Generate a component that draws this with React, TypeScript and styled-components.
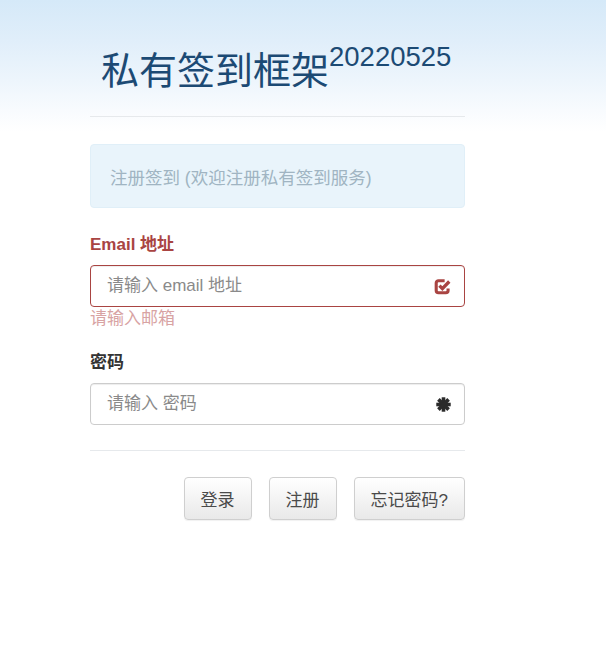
import styled, { createGlobalStyle } from 'styled-components';

const GlobalStyle = createGlobalStyle`
  html, body {
    margin: 0;
    padding: 0;
    background: #fff;
  }
  body {
    font-family: 'Liberation Sans', Arial, 'Noto Sans CJK SC', sans-serif;
    font-size: 17px;
    color: #333;
  }
`;

const Backdrop = styled.div`
  min-height: 668px;
  background-color: #fff;
  background-image: linear-gradient(
    180deg,
    #d5e9f8 0,
    #e0eefa 40px,
    #edf5fc 80px,
    #f8fbfe 110px,
    #ffffff 132px
  );
  overflow: hidden;
`;

const Page = styled.div`
  width: 375px;
  margin-left: 90px;
  padding-top: 43px;
`;

const Title = styled.h1`
  margin: 0;
  padding-left: 11px;
  font-size: 38px;
  font-weight: 400;
  line-height: 56px;
  color: #1c4a74;

  sup {
    font-size: 27.5px;
    vertical-align: 18px;
    line-height: 0;
  }
`;

const Rule = styled.hr<{ $top: number; $bottom: number }>`
  border: 0;
  border-top: 1px solid #e6e9ec;
  margin: ${(p) => p.$top}px 0 ${(p) => p.$bottom}px;
`;

const Notice = styled.div`
  height: 64px;
  box-sizing: border-box;
  padding: 0 19px;
  display: flex;
  align-items: center;
  background: #e9f4fb;
  border: 1px solid #e0eff8;
  border-radius: 4px;
  color: #a0b4c2;
  font-size: 17.5px;
`;

const Field = styled.div<{ $top: number }>`
  margin-top: ${(p) => p.$top}px;
`;

const Label = styled.label<{ $error?: boolean }>`
  display: block;
  font-weight: 700;
  font-size: 17px;
  line-height: 22px;
  margin-bottom: 9px;
  color: ${(p) => (p.$error ? '#a94442' : '#333')};
`;

const InputWrap = styled.div<{ $error?: boolean }>`
  height: 42px;
  box-sizing: border-box;
  display: flex;
  align-items: center;
  padding: 0 12px 0 16px;
  border: 1px solid ${(p) => (p.$error ? '#a94442' : '#cccccc')};
  border-radius: 4px;
  background: #fff;
  box-shadow: inset 0 1px 1px rgba(0, 0, 0, 0.075);
`;

const Input = styled.input`
  flex: 1;
  border: 0;
  outline: none;
  background: transparent;
  padding: 0;
  font-family: inherit;
  font-size: 17px;
  color: #555;

  &::placeholder {
    color: #8a8a8a;
  }
`;

const Help = styled.div`
  color: #d8a3a3;
  font-size: 17px;
  line-height: 22px;
  margin-top: 1px;
`;

const Actions = styled.div`
  display: flex;
  justify-content: flex-end;
  gap: 17px;
`;

const Button = styled.button`
  height: 43px;
  padding: 0 16px;
  font-family: inherit;
  font-size: 17px;
  color: #4a4a4a;
  border: 1px solid #cfcfcf;
  border-radius: 4px;
  background: linear-gradient(to bottom, #ffffff 0, #e9e9e9 100%);
  box-shadow: 0 1px 1px rgba(0, 0, 0, 0.06);
`;

const CheckIcon = () => (
  <svg width="19" height="19" viewBox="0 0 16 16" fill="none">
    <path
      d="M9.8 3.2H4.6A1.9 1.9 0 0 0 2.7 5.1v6.2a1.9 1.9 0 0 0 1.9 1.9h6.2a1.9 1.9 0 0 0 1.9-1.9V9.6"
      stroke="#a94442"
      strokeWidth="2.6"
    />
    <path d="M5.4 7.3l2.5 2.5 5.8-6" stroke="#a94442" strokeWidth="2.8" />
  </svg>
);

const AsteriskIcon = () => (
  <svg width="17" height="17" viewBox="0 0 16 16" fill="none">
    <g stroke="#2b2b2b" strokeWidth="3.4">
      <path d="M8 1.2v13.6" />
      <path d="M1.2 8h13.6" />
      <path d="M3.2 3.2l9.6 9.6" />
      <path d="M12.8 3.2l-9.6 9.6" />
    </g>
  </svg>
);

export default function App() {
  return (
    <Backdrop>
      <GlobalStyle />
      <Page>
        <Title>
          私有签到框架<sup>20220525</sup>
        </Title>
        <Rule $top={17} $bottom={27} />
        <Notice>注册签到 (欢迎注册私有签到服务)</Notice>
        <Field $top={26}>
          <Label $error>Email 地址</Label>
          <InputWrap $error>
            <Input type="email" placeholder="请输入 email 地址" />
            <CheckIcon />
          </InputWrap>
          <Help>请输入邮箱</Help>
        </Field>
        <Field $top={22}>
          <Label>密码</Label>
          <InputWrap>
            <Input type="password" placeholder="请输入 密码" />
            <AsteriskIcon />
          </InputWrap>
        </Field>
        <Rule $top={25} $bottom={26} />
        <Actions>
          <Button>登录</Button>
          <Button>注册</Button>
          <Button>忘记密码?</Button>
        </Actions>
      </Page>
    </Backdrop>
  );
}
